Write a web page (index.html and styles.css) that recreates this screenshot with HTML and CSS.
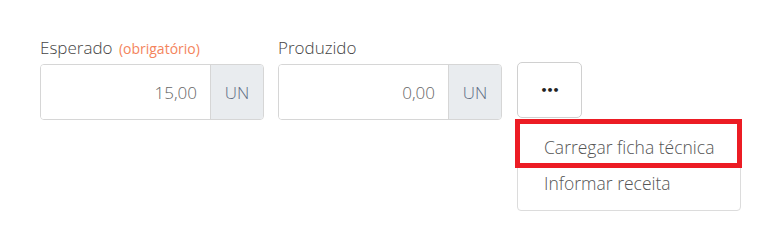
FILE: index.html
```html
<!DOCTYPE html>
<html lang="pt-BR">
<head>
    <meta charset="UTF-8">
    <meta name="viewport" content="width=device-width, initial-scale=1.0">
    <title>Produção</title>
    <link rel="stylesheet" href="styles.css">
</head>
<body>
    <div class="form-row">
        <div class="field">
            <label>Esperado <span class="required">(obrigatório)</span></label>
            <div class="input-group">
                <input type="text" value="15,00">
                <span class="addon">UN</span>
            </div>
        </div>
        <div class="field">
            <label>Produzido</label>
            <div class="input-group">
                <input type="text" value="0,00">
                <span class="addon">UN</span>
            </div>
        </div>
        <div class="actions">
            <button type="button" class="more-btn">&bull;&bull;&bull;</button>
            <ul class="dropdown">
                <li>Carregar ficha técnica</li>
                <li>Informar receita</li>
            </ul>
            <div class="highlight"></div>
        </div>
    </div>
</body>
</html>
```

FILE: styles.css
```css
html, body {
    height: 100%;
}
body {
    margin: 0;
    min-height: 239px;
    background: #fff;
    font-family: 'Open Sans', 'Liberation Sans', sans-serif;
}
.form-row {
    display: flex;
    align-items: flex-start;
    padding: 36px 0 0 40px;
}
.field {
    width: 224px;
    margin-right: 14px;
}
.field label {
    display: block;
    height: 24px;
    line-height: 24px;
    margin-bottom: 4px;
    font-size: 17px;
    font-weight: 300;
    color: #444;
}
.required {
    margin-left: 2px;
    font-size: 14px;
    font-weight: 400;
    color: #f4845c;
}
.input-group {
    display: flex;
    height: 56px;
    border: 1px solid #d6d6d6;
    border-radius: 4px;
    box-sizing: border-box;
    overflow: hidden;
}
.input-group input {
    flex: 1;
    min-width: 0;
    border: none;
    padding: 0 13px;
    text-align: right;
    font-family: inherit;
    font-size: 17px;
    font-weight: 300;
    color: #666;
    outline: none;
}
.addon {
    width: 52px;
    display: flex;
    align-items: center;
    justify-content: center;
    background: #e9ecef;
    border-left: 1px solid #d6d6d6;
    font-size: 17px;
    font-weight: 300;
    color: #5f6d84;
}
.actions {
    position: relative;
    display: flex;
    flex-direction: column;
    margin-top: 26px;
    margin-left: 1px;
}
.more-btn {
    width: 65px;
    height: 56px;
    background: #fff;
    border: 1px solid #d0d0d0;
    border-radius: 5px;
    font-size: 11px;
    letter-spacing: -1px;
    color: #222;
    padding: 0;
    font-family: 'DejaVu Sans', sans-serif;
    font-weight: bold;
}
.dropdown {
    width: 224px;
    margin: 1px 0 0;
    padding: 9px 0;
    list-style: none;
    border: 1px solid #dcdcdc;
    border-radius: 4px;
    box-sizing: border-box;
    background: #fff;
}
.dropdown li {
    padding: 0 26px;
    line-height: 36px;
    font-size: 17.5px;
    font-weight: 300;
    color: #555;
    white-space: nowrap;
}
.highlight {
    position: absolute;
    top: 57px;
    left: -2px;
    width: 227px;
    height: 49px;
    border: 5px solid #ec1c24;
    box-sizing: border-box;
}
```
